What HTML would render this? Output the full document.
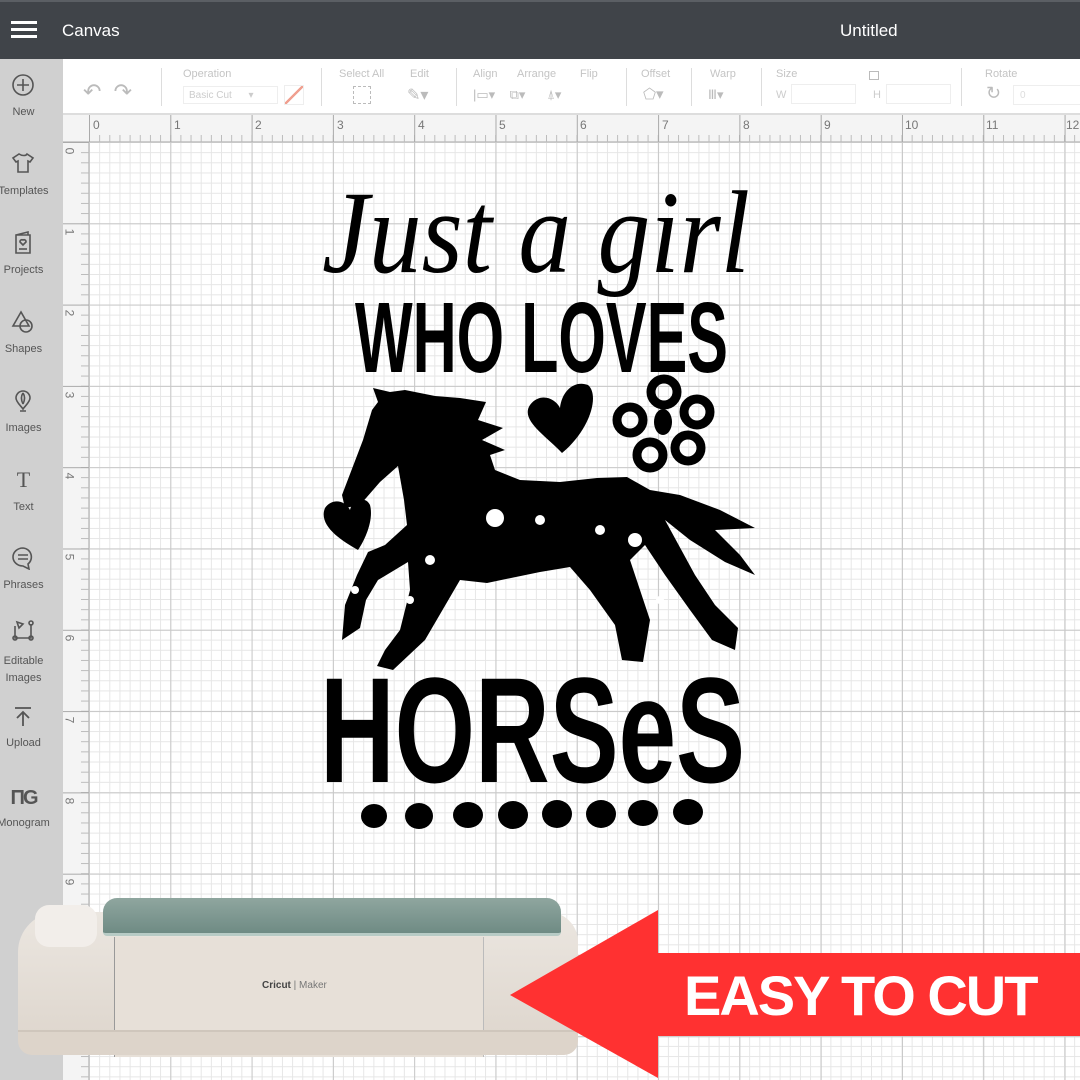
<!DOCTYPE html>
<html><head><meta charset="utf-8"><style>
*{margin:0;padding:0;box-sizing:border-box}
body{width:1080px;height:1080px;overflow:hidden;position:relative;background:#fff;font-family:"Liberation Sans",sans-serif}
.abs{position:absolute}
#top{left:0;top:0;width:1080px;height:59px;background:#404449;border-top:2px solid #5b5f64}
#side{left:0;top:59px;width:63px;height:1021px;background:#d0d0d0}
.si{position:absolute;left:0;width:63px;text-align:center;font-size:11px;color:#555}
#tool{left:63px;top:59px;width:1017px;height:56px;background:#fff;border-bottom:2px solid #ddd}
.lbl{position:absolute;top:9px;font-size:11px;color:#c4c4c4}
.sep{position:absolute;top:9px;width:1px;height:38px;background:#ddd}
#rtop{left:63px;top:115px;width:1017px;height:27px;background:#f4f4f4;border-bottom:1px solid #ccc}
#rleft{left:63px;top:142px;width:26px;height:938px;background:#f4f4f4;border-right:1px solid #ccc}
#grid{left:89px;top:142px;width:991px;height:938px;background:
linear-gradient(to right,#c8c8c8 1px,transparent 1px) 0 0/81.3px 81.3px,
linear-gradient(to bottom,#c8c8c8 1px,transparent 1px) 0 0/81.3px 81.3px,
linear-gradient(to right,#e6e6e6 1px,transparent 1px) 0 0/10.1625px 10.1625px,
linear-gradient(to bottom,#e6e6e6 1px,transparent 1px) 0 0/10.1625px 10.1625px,#fff}
.rn{position:absolute;font-size:12px;color:#777}
</style></head><body>
<div id="top" class="abs">
 <div class="abs" style="left:11px;top:19px;width:26px;height:3px;background:#fff;box-shadow:0 7px 0 #fff,0 14px 0 #fff"></div>
 <div class="abs" style="left:62px;top:19px;color:#fff;font-size:17px">Canvas</div>
 <div class="abs" style="left:840px;top:19px;color:#fff;font-size:17px">Untitled</div>
</div>
<div id="side" class="abs">
 <svg class="abs" style="left:11px;top:14px" width="24" height="24" viewBox="0 0 24 24" fill="none" stroke="#555" stroke-width="1.6"><circle cx="12" cy="12" r="10"/><path d="M12 6v12M6 12h12"/></svg>
 <div class="si" style="top:47px;left:-8px">New</div>
 <svg class="abs" style="left:11px;top:93px" width="24" height="22" viewBox="0 0 24 22" fill="none" stroke="#555" stroke-width="1.6"><path d="M8 2l-6 4 3 4 2-1v11h10V9l2 1 3-4-6-4c-1 2-5 2-8 0z"/></svg>
 <div class="si" style="top:126px;left:-8px">Templates</div>
 <svg class="abs" style="left:14px;top:172px" width="18" height="24" viewBox="0 0 18 24" fill="none" stroke="#555" stroke-width="1.6"><path d="M2 4l12-3v3M2 4h14v18H2z"/><path d="M9 14l-3-3a2 2 0 013-2 2 2 0 013 2z"/><path d="M5 18h8"/></svg>
 <div class="si" style="top:205px;left:-8px">Projects</div>
 <svg class="abs" style="left:11px;top:251px" width="24" height="24" viewBox="0 0 24 24" fill="none" stroke="#555" stroke-width="1.6"><path d="M10 2L2 16h16z"/><circle cx="15" cy="16" r="6"/></svg>
 <div class="si" style="top:284px;left:-8px">Shapes</div>
 <svg class="abs" style="left:13px;top:330px" width="20" height="24" viewBox="0 0 20 24" fill="none" stroke="#555" stroke-width="1.6"><path d="M10 2a7 7 0 00-7 7c0 4 5 8 7 11 2-3 7-7 7-11a7 7 0 00-7-7z"/><path d="M10 4c-2 3-2 7 0 11M10 4c2 3 2 7 0 11M7 22h6"/></svg>
 <div class="si" style="top:363px;left:-8px">Images</div>
 <div class="si" style="top:408px;left:-8px;font-size:22px;font-family:'Liberation Serif',serif;color:#555">T</div>
 <div class="si" style="top:442px;left:-8px">Text</div>
 <svg class="abs" style="left:11px;top:487px" width="24" height="24" viewBox="0 0 24 24" fill="none" stroke="#555" stroke-width="1.6"><path d="M12 2a10 9 0 100 18l6 3-1-5a9 9 0 00-5-16z"/><path d="M7 9h10M7 13h10"/></svg>
 <div class="si" style="top:520px;left:-8px">Phrases</div>
 <svg class="abs" style="left:11px;top:559px" width="24" height="24" viewBox="0 0 24 24" fill="none" stroke="#555" stroke-width="1.6"><path d="M4 8v12h16V6M6 4l6 2-4 4z"/><circle cx="4" cy="20" r="2"/><circle cx="20" cy="20" r="2"/><circle cx="20" cy="5" r="2"/></svg>
 <div class="si" style="top:594px;left:-8px;line-height:17px">Editable<br>Images</div>
 <svg class="abs" style="left:13px;top:647px" width="20" height="22" viewBox="0 0 20 22" fill="none" stroke="#555" stroke-width="1.8"><path d="M2 2h16M10 20V6M4 12l6-6 6 6"/></svg>
 <div class="si" style="top:678px;left:-8px">Upload</div>
 <div class="si" style="top:728px;left:-8px;font-size:20px;font-weight:bold;color:#555;letter-spacing:-2px">ΠG</div>
 <div class="si" style="top:758px;left:-8px">Monogram</div>
</div>
<div id="tool" class="abs">
 <div class="abs" style="left:20px;top:20px;font-size:22px;color:#bbb">↶&nbsp;&nbsp;↷</div>
 <div class="sep" style="left:98px"></div>
 <div class="lbl" style="left:120px">Operation</div>
 <div class="abs" style="left:120px;top:27px;width:95px;height:18px;border:1px solid #eee;font-size:10px;color:#ccc;padding:3px 5px">Basic Cut&nbsp;&nbsp;&nbsp;&nbsp;&nbsp;&nbsp;▾</div>
 <div class="abs" style="left:221px;top:26px;width:20px;height:20px;border:1px solid #eee;background:linear-gradient(135deg,transparent 45%,#f0a090 45%,#f0a090 55%,transparent 55%)"></div>
 <div class="sep" style="left:258px"></div>
 <div class="lbl" style="left:276px">Select All</div><div class="lbl" style="left:347px">Edit</div>
 <div class="abs" style="left:290px;top:27px;width:18px;height:18px;border:1px dashed #bbb"></div>
 <div class="abs" style="left:344px;top:26px;font-size:16px;color:#bbb">✎▾</div>
 <div class="sep" style="left:393px"></div>
 <div class="lbl" style="left:410px">Align</div><div class="lbl" style="left:454px">Arrange</div><div class="lbl" style="left:517px">Flip</div>
 <div class="abs" style="left:410px;top:28px;font-size:13px;color:#bbb">|▭▾&nbsp;&nbsp;&nbsp;&nbsp;⧉▾&nbsp;&nbsp;&nbsp;&nbsp;&nbsp;&nbsp;⍋▾</div>
 <div class="sep" style="left:563px"></div>
 <div class="lbl" style="left:578px">Offset</div>
 <div class="abs" style="left:580px;top:26px;font-size:15px;color:#bbb">⬠▾</div>
 <div class="sep" style="left:628px"></div>
 <div class="lbl" style="left:647px">Warp</div>
 <div class="abs" style="left:645px;top:28px;font-size:13px;color:#bbb">Ⅲ▾</div>
 <div class="sep" style="left:698px"></div>
 <div class="lbl" style="left:713px">Size</div>
 <div class="abs" style="left:713px;top:30px;font-size:11px;color:#ccc">W</div>
 <div class="abs" style="left:728px;top:25px;width:65px;height:20px;border:1px solid #eee"></div>
 <div class="abs" style="left:810px;top:30px;font-size:11px;color:#ccc">H</div>
 <div class="abs" style="left:823px;top:25px;width:65px;height:20px;border:1px solid #eee"></div>
 <div class="abs" style="left:806px;top:12px;width:10px;height:9px;border:1.5px solid #bbb"></div>
 <div class="sep" style="left:898px"></div>
 <div class="lbl" style="left:922px">Rotate</div>
 <div class="abs" style="left:923px;top:24px;font-size:18px;color:#bbb">↻</div>
 <div class="abs" style="left:950px;top:26px;width:70px;height:20px;border:1px solid #eee;font-size:10px;color:#ddd;padding:4px 6px">0</div>
</div>
<div id="rtop" class="abs">
 <div class="abs" style="left:26px;top:0;width:991px;height:27px;background:linear-gradient(to right,#aaa 1px,transparent 1px) 0 0/81.3px 27px,linear-gradient(to right,#bbb 1px,transparent 1px) 0 20px/10.1625px 7px repeat-x"></div>
</div>
<div id="rleft" class="abs"><div class="abs" style="left:0;top:0;width:26px;height:938px;background:linear-gradient(to bottom,#aaa 1px,transparent 1px) 0 0/26px 81.3px,linear-gradient(to bottom,#bbb 1px,transparent 1px) 18px 0/8px 10.1625px repeat-y"></div></div>
<div id="grid" class="abs"></div>
<div class="rn" style="left:93px;top:118px">0</div><div class="rn" style="left:174px;top:118px">1</div><div class="rn" style="left:255px;top:118px">2</div><div class="rn" style="left:337px;top:118px">3</div><div class="rn" style="left:418px;top:118px">4</div><div class="rn" style="left:499px;top:118px">5</div><div class="rn" style="left:580px;top:118px">6</div><div class="rn" style="left:662px;top:118px">7</div><div class="rn" style="left:743px;top:118px">8</div><div class="rn" style="left:824px;top:118px">9</div><div class="rn" style="left:905px;top:118px">10</div><div class="rn" style="left:986px;top:118px">11</div><div class="rn" style="left:1066px;top:118px">12</div>
<div class="rn" style="left:66px;top:144px;transform:rotate(90deg)">0</div><div class="rn" style="left:66px;top:225px;transform:rotate(90deg)">1</div><div class="rn" style="left:66px;top:306px;transform:rotate(90deg)">2</div><div class="rn" style="left:66px;top:388px;transform:rotate(90deg)">3</div><div class="rn" style="left:66px;top:469px;transform:rotate(90deg)">4</div><div class="rn" style="left:66px;top:550px;transform:rotate(90deg)">5</div><div class="rn" style="left:66px;top:631px;transform:rotate(90deg)">6</div><div class="rn" style="left:66px;top:713px;transform:rotate(90deg)">7</div><div class="rn" style="left:66px;top:794px;transform:rotate(90deg)">8</div><div class="rn" style="left:66px;top:875px;transform:rotate(90deg)">9</div>

<svg class="abs" style="left:0;top:0" width="1080" height="1080" viewBox="0 0 1080 1080">
 <text x="322" y="272" font-family="Liberation Serif" font-style="italic" font-size="118" textLength="428" lengthAdjust="spacingAndGlyphs" fill="#000">Just a girl</text>
 <text x="355" y="372" font-family="Liberation Sans" font-weight="bold" font-size="100" textLength="373" lengthAdjust="spacingAndGlyphs" fill="#000">WHO LOVES</text>
 <text x="320" y="782" font-family="Liberation Sans" font-weight="bold" font-size="150" textLength="425" lengthAdjust="spacingAndGlyphs" fill="#000">HORSeS</text>
 <g fill="#000">
  <ellipse cx="374" cy="816" rx="13" ry="12"/><ellipse cx="419" cy="816" rx="14" ry="13"/><ellipse cx="468" cy="815" rx="15" ry="13"/><ellipse cx="513" cy="815" rx="15" ry="14"/><ellipse cx="557" cy="814" rx="15" ry="14"/><ellipse cx="601" cy="814" rx="15" ry="14"/><ellipse cx="643" cy="813" rx="15" ry="13"/><ellipse cx="688" cy="812" rx="15" ry="13"/>
  <path d="M373 388L378 402L372 410L363 440L342 495L345 508L360 505L380 482L398 466L404 500L407 525L385 545L368 552L357 575L345 605L342 640L360 628L366 600L378 580L408 562L410 590L400 630L385 650L377 666L393 670L425 640L460 580L487 583L540 572L570 567L590 590L615 625L622 660L643 662L650 620L640 590L630 560L645 545L665 575L690 610L712 640L735 650L738 628L715 605L695 575L665 520L690 540L725 562L755 575L740 555L715 530L755 528L720 510L680 495L650 490L627 477L597 478L560 482L520 480L495 470L490 455L505 450L482 440L503 428L478 420L486 402L460 398L435 396L405 390L390 392Z"/>
  <path d="M562 453C545 435 520 420 530 405C540 392 555 398 560 408C562 390 575 380 588 385C600 395 590 430 562 453Z"/>
  <path d="M358 550C340 540 318 525 325 508C332 498 345 500 350 510C352 500 365 495 370 505C374 520 365 540 358 550Z"/>
  <g fill="none" stroke="#000" stroke-width="9"><circle cx="664" cy="392" r="13"/><circle cx="697" cy="412" r="13"/><circle cx="688" cy="448" r="13"/><circle cx="650" cy="455" r="13"/><circle cx="630" cy="420" r="13"/></g>
  <ellipse cx="663" cy="422" rx="9" ry="13"/>
 </g>
 <g fill="#fff"><circle cx="495" cy="518" r="9"/><circle cx="430" cy="560" r="5"/><circle cx="600" cy="530" r="5"/><circle cx="635" cy="540" r="7"/><circle cx="540" cy="520" r="5"/><circle cx="660" cy="600" r="4"/><circle cx="355" cy="590" r="4"/><circle cx="410" cy="600" r="4"/></g>
</svg>

<!-- cricut machine -->
<div class="abs" style="left:18px;top:912px;width:560px;height:140px;background:linear-gradient(#ebe6e0,#ddd5cc);border-radius:40px 30px 14px 14px"></div>
<div class="abs" style="left:35px;top:905px;width:62px;height:42px;background:#f2eeea;border-radius:14px"></div>
<div class="abs" style="left:103px;top:898px;width:458px;height:38px;background:linear-gradient(#8fa69f,#6f8b84);border-radius:14px 14px 4px 4px;border-bottom:3px solid #b7cbc5"></div>
<div class="abs" style="left:114px;top:937px;width:370px;height:120px;background:#e7e0d8;border-left:1px solid #999;border-right:1px solid #bbb"></div>
<div class="abs" style="left:18px;top:1030px;width:560px;height:25px;background:#ddd4ca;border-top:2px solid #cfc6bc;border-radius:0 0 14px 14px"></div>
<div class="abs" style="left:262px;top:980px;font-size:10px;color:#444;font-weight:bold">Cricut <span style="font-weight:normal;color:#777">| Maker</span></div>

<!-- arrow -->
<svg class="abs" style="left:0;top:0" width="1080" height="1080"><path d="M510 995L658 910V953H1080V1036H658V1078Z" fill="#ff3131"/></svg>
<div class="abs" style="left:684px;top:963px;color:#fff;font-weight:bold;font-size:56px;letter-spacing:-2px;white-space:nowrap">EASY TO CUT</div>
</body></html>
